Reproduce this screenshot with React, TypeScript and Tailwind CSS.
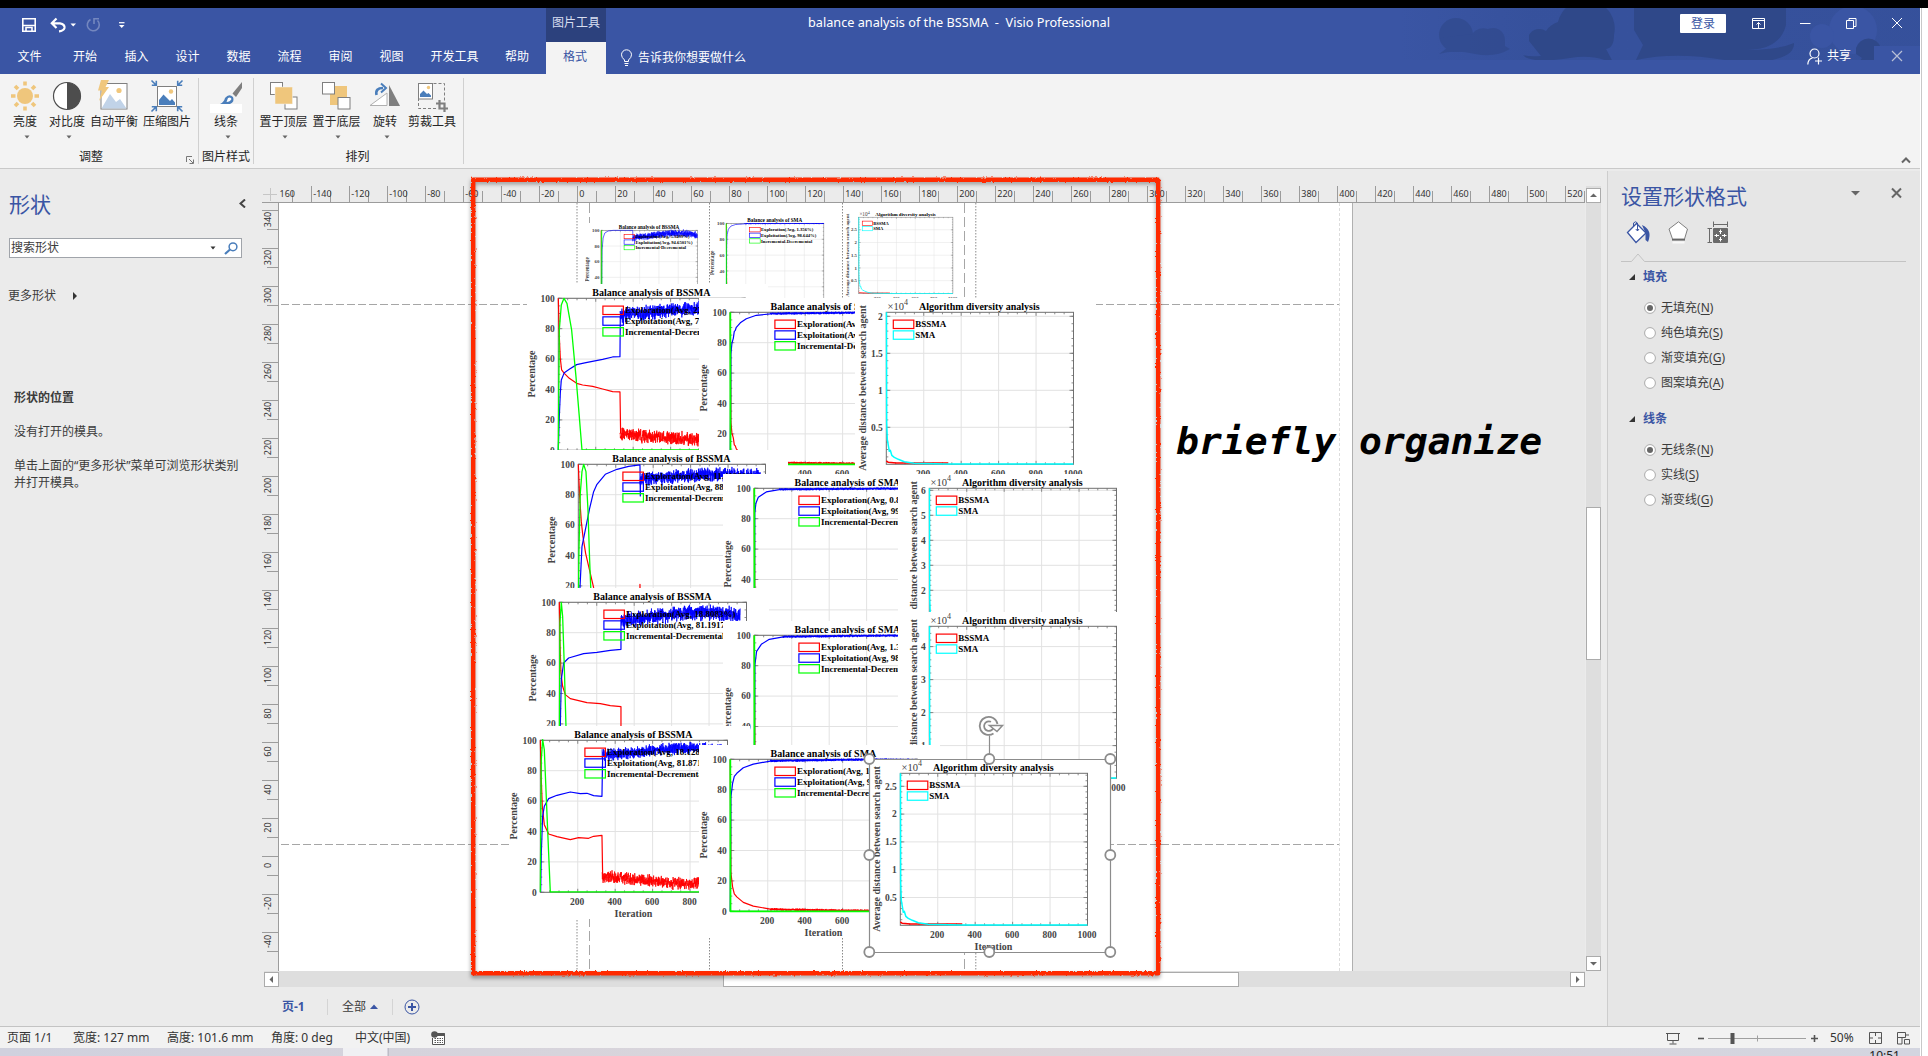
import React from "react";

type P = [number, number];

/* ---------- deterministic noise ---------- */
function rng(seed: number) {
  let s = seed * 7919;
  return () => {
    s = (s * 16807) % 2147483647;
    return s / 2147483647;
  };
}
function noise(seed: number, x0: number, x1: number, ya: number, yb: number, amp: number): P[] {
  const r = rng(seed);
  const out: P[] = [];
  for (let x = x0; x <= x1; x += 0.14) {
    const t = (x - x0) / (x1 - x0);
    const base = ya + (yb - ya) * Math.min(1, t * 1.7) + Math.max(0, t - 0.75) * (ya - yb) * 1.5;
    const v = r() + r() - 1;
    out.push([x, base + v * amp]);
  }
  return out;
}
const path = (pts: P[]) => "M" + pts.map((p) => p[0].toFixed(2) + " " + p[1].toFixed(2)).join("L");
const local = (pts: P[], ox: number, oy: number, k = 3): P[] =>
  pts.map(([x, y]) => [(x - ox) / k, (y - oy) / k] as P);

const PW = 187.2;
const PH = 152;

function Axes({ yMajor, yMinor }: { yMajor: number[]; yMinor: number }) {
  const xs = [0.2, 0.4, 0.6, 0.8].map((f) => f * PW);
  const minorX = Array.from({ length: 19 }, (_, i) => ((i + 1) * PW) / 20);
  const minorY: number[] = [];
  const anchor = yMajor[0];
  for (let y = anchor % yMinor; y < PH; y += yMinor) minorY.push(y);
  return (
    <g>
      {xs.map((x) => (
        <path key={x} d={`M${x} 0V${PH}`} stroke="#e2e2e2" />
      ))}
      {yMajor.map((y) => (
        <path key={y} d={`M0 ${y}H${PW}`} stroke="#e2e2e2" />
      ))}
      <rect x="0" y="0" width={PW} height={PH} fill="none" stroke="#707070" />
      {minorX.map((x, i) => (
        <path
          key={x}
          d={`M${x} 0v${i % 4 === 3 ? 3.5 : 2}M${x} ${PH}v${i % 4 === 3 ? -3.5 : -2}`}
          stroke="#707070"
          strokeWidth="0.8"
        />
      ))}
      {minorY.map((y) => (
        <path key={y} d={`M0 ${y}h2M${PW} ${y}h-2`} stroke="#707070" strokeWidth="0.8" />
      ))}
      {yMajor.map((y) => (
        <path key={y} d={`M0 ${y}h4M${PW} ${y}h-4`} stroke="#707070" strokeWidth="0.8" />
      ))}
    </g>
  );
}

function Frame({
  x,
  y,
  s = 1,
  yMajor,
  yMinor,
  yLabels,
  yTitle,
  title,
  legend,
  lx,
  exp,
  titleX = -23,
  children,
}: {
  x: number;
  y: number;
  s?: number;
  yMajor: number[];
  yMinor: number;
  yLabels: string[];
  yTitle: string;
  title: string;
  legend: [string, string][];
  lx: number;
  exp?: boolean;
  titleX?: number;
  children: React.ReactNode;
}) {
  return (
    <svg
      className="absolute bg-white"
      style={{ left: x - 279 - 31.3 * s, top: y - 203 - 14.3 * s }}
      width={241 * s}
      height={193 * s}
      viewBox="-31.3 -14.3 241 193"
      fontFamily="'Liberation Serif', serif"
      fontWeight="bold"
    >
      <Axes yMajor={yMajor} yMinor={yMinor} />
      {children}
      <g fontSize="9.5" fill="#454545">
        {yLabels.map((l, i) => (
          <text key={l} x="-3.5" y={yMajor[i] + 3.3} textAnchor="end">
            {l}
          </text>
        ))}
        {["200", "400", "600", "800", "1000"].map((l, i) => (
          <text key={l} x={((i + 1) * PW) / 5 - 0.5} y={PH + 12.6} textAnchor="middle">
            {l}
          </text>
        ))}
      </g>
      <text x={PW / 2 - 0.5} y={PH + 24.6} fontSize="10" textAnchor="middle" fill="#454545">
        Iteration
      </text>
      <text
        transform={`translate(${titleX} 75.7) rotate(-90)`}
        fontSize="10"
        textAnchor="middle"
        fill="#454545"
      >
        {yTitle}
      </text>
      <text x={PW / 2 - 0.5} y="-2.8" fontSize="10" textAnchor="middle" fill="#000">
        {title}
      </text>
      {exp && (
        <text x="1.3" y="-2.4" fontSize="10.5" fontWeight="normal" fill="#3c3c3c">
          ×10
          <tspan dy="-4.5" fontSize="8">
            4
          </tspan>
        </text>
      )}
      {legend.map(([c, l], i) => (
        <g key={l}>
          <rect x={lx} y={7.8 + i * 10.75} width="20.5" height="8.4" fill={exp ? "#fff" : "none"} stroke={c} strokeWidth="1.2" />
          <text x={lx + 22} y={15.2 + i * 10.75} fontSize="9" fill="#000">
            {l}
          </text>
        </g>
      ))}
    </svg>
  );
}

const balY = [0, 30.4, 60.8, 91.2, 121.6, 152];
const balL = ["100", "80", "60", "40", "20", "0"];

interface BalProps {
  x: number;
  y: number;
  s?: number;
  kind: "BSSMA" | "SMA";
  a: string;
  b: string;
  red: P[];
  blue: P[];
  green: P[];
  noisy?: P[][];
}
function Balance({ x, y, s, kind, a, b, red, blue, green, noisy }: BalProps) {
  return (
    <Frame
      x={x}
      y={y}
      s={s}
      yMajor={balY}
      yMinor={7.6}
      yLabels={balL}
      yTitle="Percentage"
      title={`Balance analysis of ${kind}`}
      lx={44.6}
      legend={[
        ["#f00", `Exploration(Avg, ${a}%)`],
        ["#00f", `Exploitation(Avg, ${b}%)`],
        ["#0f0", "Incremental-Decremental"],
      ]}
    >
      <g fill="none" strokeWidth="1.2" strokeLinejoin="round">
        <path d={path(red)} stroke="#f00" />
        <path d={path(blue)} stroke="#00f" />
        {noisy && <path d={path(noisy[0])} stroke="#f00" strokeWidth="0.8" />}
        {noisy && <path d={path(noisy[1])} stroke="#00f" strokeWidth="0.8" />}
        <path d={path(green)} stroke="#0f0" strokeWidth={kind === "SMA" ? 1.8 : 1.3} />
      </g>
    </Frame>
  );
}

function Diversity({
  x,
  y,
  s,
  top,
  step,
  minor,
  labels,
  titleX = -20,
}: {
  x: number;
  y: number;
  s?: number;
  top: number;
  step: number;
  minor: number;
  labels: string[];
  titleX?: number;
}) {
  return (
    <Frame
      x={x}
      y={y}
      s={s}
      yMajor={labels.map((_, i) => top + i * step)}
      yMinor={minor}
      yLabels={labels}
      yTitle="Average distance between search agent"
      title="Algorithm diversity analysis"
      lx={7}
      exp
      titleX={titleX}
      legend={[
        ["#f00", "BSSMA"],
        ["#0ff", "SMA"],
      ]}
    >
      <g fill="none" strokeWidth="1.5" strokeLinejoin="round">
        <path d="M0 148.500L2 150L10 150.600L62 150.800" stroke="#f00" />
        <path d="M0.200 0L0.400 110L1 127L2 133L3 139L4 138L5.500 143L8 145L12 147L18 149.500L28 151L60 151.800H187" stroke="#0ff" />
      </g>
    </Frame>
  );
}

const smaGreen: P[] = [[0, 0], [0.2, 152], [187, 152]];
const smaBlue = (pts: P[], seed: number): P[] => {
  const out: P[] = [[0, 152], ...pts];
  const last = pts[pts.length - 1];
  return [...out, ...noise(seed, last[0], 187, last[1] - 0.2, 0.3, 0.9)];
};
const mirror = (pts: P[]): P[] => [[0, 0], ...pts.slice(1).map(([x, y]) => [x, 151.6 - y] as P)];
const b1 = smaBlue([[0.7, 45], [1.5, 22], [4, 11], [9, 5], [18, 2], [35, 0.8]], 5);
const b2 = smaBlue([[0.6, 42], [1.6, 31], [3, 26], [4, 19], [5, 18], [6, 15], [10, 10.5], [16, 6.5], [26, 3], [40, 1.6]], 11);
const b3 = smaBlue([[0.5, 25], [1.6, 15], [4, 9], [12, 3.6], [25, 1.3]], 21);
const b4 = smaBlue([[0.6, 30], [2.3, 16], [7, 9], [15, 4], [29, 1.6]], 31);
const b5 = smaBlue([[0.6, 38], [2.3, 24], [4, 17], [6.5, 14], [13, 8.5], [23, 4.8], [40, 1.8]], 41);

function Charts() {
  return (
    <>
      <Balance
        x={601.3} y={230.7} s={0.515} kind="BSSMA" a="5.3499" b="94.6501"
        red={[[0, 0], [1, 152]]}
        blue={[...local([[395, 416], [397, 240], [400, 205], [405, 190], [415, 184], [430, 182], [489, 182], [489, 215]], 394, 182, 1.545)]}
        green={[[0, 152], [0.6, 2], [1.2, 0], [1.6, 152], [187, 152]]}
        noisy={[noise(3, 61.8, 187, 136, 145, 8), noise(4, 61.8, 187, 15, 5, 8)]}
      />
      <Balance x={726.7} y={223.7} s={0.521} kind="SMA" a="1.356" b="98.644" red={mirror(b1)} blue={b1} green={smaGreen} />
      <Diversity x={858.3} y={217.3} s={0.503} top={25} step={25.3} minor={5.06} labels={["2.5", "2", "1.5", "1", "0.5"]} />

      <Balance
        x={558.7} y={298.7} kind="BSSMA" a="22.4712" b="77.5288"
        red={local([[267, 385], [270, 500], [273, 565], [277, 600], [285, 610], [300, 625], [322, 640], [340, 645], [370, 649], [400, 657], [430, 665], [452, 666], [454, 790]], 267, 385)}
        blue={local([[267, 840], [270, 740], [273, 670], [276, 630], [285, 608], [300, 598], [322, 584], [350, 578], [400, 568], [430, 561], [452, 560], [453, 440]], 267, 385)}
        green={local([[267, 840], [270, 480], [276, 405], [284, 385], [293, 400], [307, 480], [320, 620], [330, 740], [338, 840], [828, 840]], 267, 385)}
        noisy={[noise(7, 61.8, 187, 136, 141, 8), noise(8, 61.8, 187, 17, 10, 8.5)]}
      />
      <Balance x={730.3} y={312.7} kind="SMA" a="2.2417" b="97.7583" red={mirror(b2)} blue={b2} green={smaGreen} />
      <Diversity x={886.3} y={312.7} top={4} step={37} minor={7.4} labels={["2", "1.5", "1", "0.5"]} />

      <Balance
        x={578} y={464.5} kind="BSSMA" a="11.4126" b="88.5874"
        red={local([[234, 43], [238, 140], [243, 215], [248, 260], [256, 310], [280, 413], [300, 470], [418, 490], [419, 403], [420, 460]], 234, 43)}
        blue={local([[235, 500], [239, 413], [245, 290], [256, 235], [268, 175], [280, 125], [290, 103], [315, 73], [350, 58], [385, 49], [419, 45], [420, 138], [421, 85]], 234, 43)}
        green={local([[234, 500], [236, 300], [240, 130], [245, 65], [250, 43], [257, 65], [263, 180], [268, 330], [274, 480]], 234, 43)}
        noisy={[noise(13, 61.8, 187, 134, 141, 8), noise(14, 61.8, 182, 15, 10, 8)]}
      />
      <Balance x={754.3} y={488.3} kind="SMA" a="0.8214" b="99.1786" red={mirror(b3)} blue={b3} green={smaGreen} />
      <Diversity x={929.3} y={488.7} top={2} step={25} minor={5} labels={["6", "5", "4", "3", "2", "1"]} titleX={-12.6} />

      <Balance
        x={559} y={602.5} kind="BSSMA" a="18.8083" b="81.1917"
        red={local([[177, 458], [179, 580], [182, 670], [187, 710], [195, 735], [210, 747], [260, 759], [300, 762], [330, 768], [362, 771], [362, 870]], 177, 458)}
        blue={local([[179, 890], [181, 780], [183, 690], [190, 640], [205, 625], [250, 612], [290, 608], [330, 602], [362, 599], [362, 510]], 177, 458)}
        green={local([[177, 900], [179, 520], [183, 458], [187, 500], [192, 650], [199, 900]], 177, 458)}
        noisy={[noise(23, 61.8, 187, 134, 141, 8), noise(24, 61.8, 181, 18, 10, 9)]}
      />
      <Balance x={754.3} y={635.3} kind="SMA" a="1.3342" b="98.6658" red={mirror(b4)} blue={b4} green={smaGreen} />
      <Diversity x={929.3} y={626.3} top={20.3} step={33} minor={6.6} labels={["4", "3", "2", "1"]} titleX={-12.6} />

      <Balance
        x={540} y={740.7} kind="BSSMA" a="18.1287" b="81.8713"
        red={local([[210, 62], [213, 180], [216, 260], [222, 315], [235, 343], [260, 351], [300, 360], [325, 354], [355, 356], [370, 350], [395, 347], [397, 465]], 210, 62)}
        blue={local([[211, 517], [213, 400], [217, 290], [222, 260], [235, 237], [260, 227], [300, 217], [330, 222], [350, 221], [370, 228], [395, 230], [397, 110]], 210, 62)}
        green={local([[210, 517], [213, 120], [217, 60], [222, 90], [232, 330], [240, 517], [770, 517]], 210, 62)}
        noisy={[noise(33, 61.8, 187, 136, 143, 7), noise(34, 61.8, 187, 15, 8, 7)]}
      />
      <Balance x={730.3} y={759.3} kind="SMA" a="1.6021" b="98.3979" red={mirror(b5)} blue={b5} green={smaGreen} />
      <Diversity x={900.3} y={773.5} top={13} step={27.8} minor={5.56} labels={["2.5", "2", "1.5", "1", "0.5"]} />
    </>
  );
}

/* ---------- canvas ---------- */
function Guides() {
  return (
    <svg className="absolute left-0 top-0" width="1073" height="768" viewBox="279 203 1073 768" fill="none" stroke="#a6a6a6">
      <g strokeDasharray="8 3">
        <path d="M281 304.500H1339M281 844.500H1339" />
      </g>
      <path d="M589.500 203V971M964.500 203V971" strokeDasharray="10 4" />
      <path d="M1339.500 203V971" stroke="#dcdcdc" strokeDasharray="3 2" />
      <path d="M577 203V971M709.500 203V971M842.500 203V971M975.800 203V971" stroke="#8a8a8a" strokeDasharray="1.500 1.500" />
    </svg>
  );
}

function Selection() {
  const pts: P[] = [[869, 759], [989, 759], [1110, 759], [869, 855], [1110, 855], [869, 952], [989, 952], [1110, 952]];
  return (
    <svg className="absolute left-0 top-0" width="1073" height="768" viewBox="279 203 1073 768" fill="none" stroke="#8c8c8c">
      <path d="M869.500 759.500H1110.500V952.500H869.500ZM989.500 759V730" strokeWidth="1.2" />
      {pts.map(([x, y]) => (
        <circle key={`${x}-${y}`} cx={x + 0.3} cy={y} r="5" fill="#fff" strokeWidth="1.8" />
      ))}
      <circle cx="989" cy="726" r="9.5" fill="#fff" stroke="none" />
      <path d="M997.500 724A9 9 0 1 0 993.500 733.500M993.500 727.500A4.800 4.800 0 1 1 991 721.800" strokeWidth="1.800" />
      <path d="M989.500 725.500H1002.500L997 731.500Z" fill="#fff" strokeWidth="1.500" />
    </svg>
  );
}

function Highlight() {
  return (
    <svg className="pointer-events-none absolute left-[200px] top-[-1px]" width="710" height="820" viewBox="462 168 710 820" fill="none">
      <defs>
        <filter id="rough" x="-5%" y="-5%" width="110%" height="110%">
          <feTurbulence type="fractalNoise" baseFrequency="0.45" numOctaves="2" seed="4" />
          <feDisplacementMap in="SourceGraphic" scale="2.6" />
        </filter>
        <filter id="soft" x="-5%" y="-5%" width="110%" height="110%">
          <feGaussianBlur stdDeviation="2.2" />
        </filter>
      </defs>
      <rect x="473" y="182" width="685" height="794" stroke="#000" strokeOpacity="0.4" strokeWidth="4" filter="url(#soft)" />
      <rect x="473.200" y="179.800" width="685" height="793.500" stroke="#ff2a00" strokeWidth="4.400" strokeLinejoin="round" filter="url(#rough)" />
    </svg>
  );
}

function HRuler() {
  const vals = Array.from({ length: 35 }, (_, i) => -160 + i * 20);
  return (
    <svg width="1323" height="17" viewBox="262 186 1323 17" fontFamily="'Noto Sans', sans-serif" fontSize="9" fill="#333">
      <path d="M263 194.500h14M270.500 188v13" stroke="#c6c6c6" />
      <path d="M262 202.500H1585" stroke="#9c9c9c" />
      {vals.map((v) => {
        const x = 577.3 + v * 1.9;
        return (
          <g key={v}>
            {v > -160 && <path d={`M${Math.floor(x) + 0.5} 186V202`} stroke="#9c9c9c" />}
            <path d={`M${Math.floor(x + 19) + 0.5} 191V202`} stroke="#9c9c9c" />
            <text x={v === -160 ? 279.5 : x + 2} y="197.300">
              {v === -160 ? "160" : v}
            </text>
          </g>
        );
      })}
    </svg>
  );
}
function VRuler() {
  const vals = Array.from({ length: 20 }, (_, i) => 340 - i * 20);
  return (
    <svg width="17" height="768" viewBox="262 203 17 768" fontFamily="'Noto Sans', sans-serif" fontSize="9" fill="#333">
      <path d="M278.500 203V971" stroke="#9c9c9c" />
      {vals.map((v) => {
        const y = Math.round(210.3 + (340 - v) * 1.9) + 0.5;
        return (
          <g key={v}>
            <path d={`M262 ${y}H278M267 ${y + 19}H278`} stroke="#9c9c9c" />
            <text transform={`translate(271 ${y + 9}) rotate(-90)`} textAnchor="middle">
              {v}
            </text>
          </g>
        );
      })}
    </svg>
  );
}

function ScrollBtn({ d }: { d: string }) {
  return (
    <svg width="15" height="15" viewBox="0 0 15 15" className="shrink-0">
      <rect x="0.5" y="0.5" width="14" height="14" fill="#fff" stroke="#ababab" />
      <path d={d} fill="#666" />
    </svg>
  );
}

/* ---------- header ---------- */
function Down({ c = "#666" }: { c?: string }) {
  return (
    <svg width="6" height="4" viewBox="0 0 6 4">
      <path d="M0.500 0.500H5.500L3 3.500Z" fill={c} />
    </svg>
  );
}

function TitleArt() {
  return (
    <svg className="absolute right-0 top-0" width="520" height="52" viewBox="1400 8 520 52">
      <defs>
        <linearGradient id="fade" x1="0" x2="1">
          <stop offset="0" stopColor="#2f4a8e" stopOpacity="0" />
          <stop offset="0.25" stopColor="#2f4a8e" stopOpacity="0.35" />
          <stop offset="1" stopColor="#2f4a8e" stopOpacity="0.4" />
        </linearGradient>
      </defs>
      <rect x="1400" y="8" width="520" height="52" fill="url(#fade)" />
      <circle cx="1853" cy="30" r="24" fill="#3a55a4" />
      <circle cx="1822" cy="36" r="12" fill="#3a55a4" />
      <g fill="#2f4889">
        <g opacity="0.6">
          <circle cx="1456" cy="35" r="17" />
          <path d="M1440 38L1447 48L1439 54Q1455 49 1475 54Q1495 58 1510 49L1505 46V40A12 12 0 0 0 1488 29A14 14 0 0 0 1472 34Z" />
        </g>
        <path d="M1529 41V35A12 12 0 0 1 1546 31A22 22 0 0 1 1558 22A27 27 0 0 1 1614 35Q1614 48 1606 49L1614 64Q1595 54 1570 58Q1530 64 1523 55Q1528 57 1541 56Z" />
        <path d="M1634 8H1786V25Q1780 50 1745 50Q1778 50 1794 43Q1795 62 1740 63Q1680 50 1636 60L1643 45L1634 30Z" />
        <path d="M1856 54V48A13 13 0 0 1 1881 48Q1900 46 1905 54L1866 62L1856 66L1862 58Z" />
      </g>
    </svg>
  );
}

function Header() {
  const tabs: [string, string][] = [
    ["文件", "w-[59px]"], ["开始", "w-[52px]"], ["插入", "w-[51px]"], ["设计", "w-[51px]"], ["数据", "w-[51px]"],
    ["流程", "w-[51px]"], ["审阅", "w-[51px]"], ["视图", "w-[51px]"], ["开发工具", "w-[75px]"], ["帮助", "w-[50px]"],
  ];
  return (
    <div className="relative bg-[#3a55a4] text-xs text-white">
      <TitleArt />
      <div className="relative flex h-[34px]">
        <div className="w-[546px]">
          <svg width="140" height="34" viewBox="0 8 140 34" fill="none" stroke="#fff" strokeWidth="1.600">
            <path d="M22.800 18.800H35.200V31.200H22.800ZM22.800 25.500H35.200" />
            <path d="M26 31v-3.500h6V31" />
            <path d="M52.500 23.300H60Q65 24 64.500 28Q63.500 31 59 31.300M56.500 18.500L51.800 23.300L56.500 28" strokeWidth="2.200" />
            <path d="M70.500 23.500H76L73.200 26.500Z" fill="#fff" stroke="none" />
            <path d="M90.500 19.500A6 6 0 1 0 97.500 20.500M94 24V18.800H99" stroke="#7487bf" />
            <path d="M119 22.700H124.500" strokeWidth="1.200" />
            <path d="M119 25H124.500L121.700 28Z" fill="#fff" stroke="none" />
          </svg>
        </div>
        <div className="flex w-[60px] items-start justify-center bg-[#2c417d] pt-[6px] leading-[17px] text-[#d8def0]">图片工具</div>
        <div className="flex flex-1 items-start pl-[202px] pt-[6px] text-[12.700px] leading-[17px] whitespace-pre">
          balance analysis of the BSSMA  -  Visio Professional
        </div>
        <div className="flex w-[240px] items-start pt-[6px]">
          <div className="flex h-[19px] w-[46px] items-center justify-center rounded-[1px] bg-white text-[#3a55a4]">登录</div>
          <svg width="194" height="20" viewBox="1726 14 194 20" fill="none" stroke="#fff" className="shrink-0">
            <path d="M1752.500 18.500H1764.500V28.500H1752.500ZM1752.500 20.500H1764.500M1758.500 28V22.500M1756.500 24.500L1758.500 22.500L1760.500 24.500" />
            <path d="M1800 23.500H1810.500" />
            <path d="M1846.500 20.500H1853.500V28.500H1846.500ZM1849 20V18.500H1856V26.500H1854" />
            <path d="M1892 18L1902 28M1902 18L1892 28" />
          </svg>
        </div>
      </div>
      <div className="relative flex h-8">
        {tabs.map(([t, w]) => (
          <div key={t} className={`${w} flex h-[30px] shrink-0 items-center justify-center`}>{t}</div>
        ))}
        <div className="w-1 shrink-0" />
        <div className="flex h-8 w-[60px] shrink-0 items-center justify-center bg-[#f3f3f3] pb-[2px] pr-[2px] text-[#3a55a4]">格式</div>
        <div className="flex h-8 flex-1 items-center gap-[5px] pl-[14px]">
          <svg width="13" height="18" viewBox="0 0 13 18" fill="none" stroke="#fff">
            <path d="M4.500 12.500V11Q1.500 8.500 1.500 5.800A5 5 0 0 1 11.500 5.800Q11.500 8.500 8.500 11V12.500ZM4.500 14.500H8.500M5 16.500H8" />
          </svg>
          <span>告诉我你想要做什么</span>
        </div>
        <div className="flex w-[67px] items-center gap-1 pb-1">
          <svg width="16" height="17" viewBox="0 0 16 17" fill="none" stroke="#fff" strokeWidth="1.200">
            <circle cx="7.500" cy="5.500" r="4.500" />
            <path d="M0.800 16.500Q1 11 5.500 10M11.500 9.500V16.500M8 13H15" />
          </svg>
          共享
        </div>
        <div className="flex h-7 w-[46px] items-center justify-center self-end bg-[#3a55a4]">
          <svg width="12" height="12" viewBox="0 0 12 12" stroke="#b9c0d6" className="-mt-2">
            <path d="M1 1L11 11M11 1L1 11" strokeWidth="1.200" />
          </svg>
        </div>
      </div>
    </div>
  );
}

/* ---------- ribbon ---------- */
const icons: Record<string, React.ReactNode> = {
  亮度: (
    <g stroke="#efc67c" strokeWidth="3.600">
      <circle cx="16" cy="16" r="8" fill="#efc67c" stroke="none" />
      <path d="M16 1.500v4M16 26.500v4M2 16h4.500M25.500 16H30M6 6l3 3M23 23l3 3M26 6l-3 3M9 23l-3 3" />
    </g>
  ),
  对比度: (
    <g>
      <circle cx="16" cy="16" r="13.500" fill="#fff" stroke="#4d4d4d" strokeWidth="1.200" />
      <path d="M16 2.500a13.500 13.500 0 0 1 0 27z" fill="#4d4d4d" />
    </g>
  ),
  自动平衡: (
    <g>
      <rect x="3" y="3.500" width="26" height="25.500" fill="#fff" stroke="#7f7f7f" />
      <path d="M3.500 28.500L12 14L18 22L22 19L28.500 28.500Z" fill="#c1d3e8" />
      <circle cx="21" cy="10.500" r="2.600" fill="#f0c77d" />
      <path d="M3 0H11L7.500 7H11L1 21L4 10.500H0Z" fill="#f0c77d" />
    </g>
  ),
  压缩图片: (
    <g>
      <rect x="6.500" y="6.500" width="19" height="20" fill="#fff" stroke="#7f7f7f" />
      <path d="M8 25V20L12.500 14.500L19 21L21 19L24 22.500V25Z" fill="#4a7ebb" />
      <circle cx="20" cy="11.500" r="2.200" fill="#f0c77d" />
      <path d="M0.500 0.500L5 5M5.300 0.800V5.300H0.800M31.500 0.500L27 5M26.700 0.800V5.300H31.200M0.500 31.500L5 27M0.800 26.700H5.300V31.200M31.500 31.500L27 27M31.200 26.700H26.700V31.200" stroke="#4a7ebb" strokeWidth="1.600" fill="none" />
    </g>
  ),
  线条: (
    <g>
      <rect x="0" y="24" width="32" height="9" fill="#fff" />
      <path d="M32 2V8L26 17L22.500 13.500Z" fill="#7f7f7f" />
      <path d="M10 24Q14 22 15 18Q19 13 23 17Q25 22 20 24Z" fill="#4a7ebb" />
      <path d="M18 18Q20.500 16.500 21.500 19Q20 22 16.500 22Z" fill="#fff" />
    </g>
  ),
  置于顶层: (
    <g>
      <rect x="2.500" y="2.500" width="12" height="12" fill="#fff" stroke="#7f7f7f" />
      <rect x="17" y="17" width="12" height="12" fill="#fff" stroke="#7f7f7f" />
      <rect x="7" y="7" width="17.500" height="17" fill="#efc67c" stroke="#f3f3f3" strokeWidth="0.500" />
    </g>
  ),
  置于底层: (
    <g>
      <rect x="9" y="6" width="17" height="19" fill="#efc67c" />
      <rect x="1.500" y="2.500" width="12" height="11.500" fill="#fff" stroke="#7f7f7f" />
      <rect x="17" y="17.500" width="12" height="11.500" fill="#fff" stroke="#7f7f7f" />
    </g>
  ),
  旋转: (
    <g>
      <path d="M1 25.500H18V13Z" fill="#fff" stroke="#b0b0b0" />
      <path d="M20 5L31 26H20Z" fill="#7f7f7f" />
      <path d="M7.500 15Q6 8 14 8" stroke="#4a7ebb" strokeWidth="2.600" fill="none" />
      <path d="M12 3.500L17 8L12 12.500" stroke="#4a7ebb" strokeWidth="2" fill="none" />
    </g>
  ),
  剪裁工具: (
    <g>
      <path d="M2.500 3.500H28.500V22M2.500 3V28.500H20" fill="none" stroke="#7f7f7f" strokeDasharray="3 2" />
      <rect x="2.500" y="3.500" width="14" height="15.500" fill="#fff" stroke="#7f7f7f" />
      <path d="M4 17V14L7.500 10.500L11 14L12.500 13L15 15.500V17Z" fill="#4a7ebb" />
      <circle cx="12.500" cy="7.500" r="1.700" fill="#f0c77d" />
      <path d="M23.500 20V28.500H32M20 23.500H28.500V32" fill="none" stroke="#7f7f7f" strokeWidth="2.200" />
    </g>
  ),
};

function RibbonButton({ name, w, arrow }: { name: string; w: string; arrow?: boolean }) {
  return (
    <div className={`${w} flex shrink-0 flex-col items-center pt-[6px]`}>
      <svg width="32" height="32" viewBox="0 0 32 32" className="overflow-visible">
        {icons[name]}
      </svg>
      <span className="mt-px h-[17px] leading-[17px] whitespace-nowrap">{name}</span>
      <span className="mt-[5px] ml-[3px] flex h-1">{arrow && <Down />}</span>
    </div>
  );
}
function Group({ w, label, shift = "", corner, children }: { w: string; label: string; shift?: string; corner?: boolean; children: React.ReactNode }) {
  return (
    <div className={`${w} relative my-1 flex flex-col border-r border-[#d0d0d0]`}>
      <div className="-mt-1 flex h-[77px]">{children}</div>
      <div className={`flex h-[14px] items-center justify-center leading-[14px] ${shift}`}>{label}</div>
      {corner && (
        <svg className="absolute right-1 bottom-0" width="8" height="8" viewBox="0 0 8 8" fill="none" stroke="#777">
          <path d="M0.500 6V0.500H6M3 3L7 7M7.500 3.500V7.500H3.500" />
        </svg>
      )}
    </div>
  );
}
function Ribbon() {
  return (
    <div className="flex h-[95px] border-b border-[#c9c9c9] bg-[#f3f3f3] text-xs text-[#262626]">
      <Group w="w-[199px]" label="调整" shift="pr-[16px]" corner>
        <div className="w-[4px]" />
        <RibbonButton name="亮度" w="w-[42px]" arrow />
        <RibbonButton name="对比度" w="w-[42px]" arrow />
        <RibbonButton name="自动平衡" w="w-[52px]" />
        <RibbonButton name="压缩图片" w="w-[54px]" />
      </Group>
      <Group w="w-[55px]" label="图片样式">
        <RibbonButton name="线条" w="w-[54px]" arrow />
      </Group>
      <Group w="w-[210px]" label="排列" shift="pr-[2px]">
        <div className="w-[3px]" />
        <RibbonButton name="置于顶层" w="w-[53px]" arrow />
        <RibbonButton name="置于底层" w="w-[53px]" arrow />
        <RibbonButton name="旋转" w="w-[44px]" arrow />
        <RibbonButton name="剪裁工具" w="w-[50px]" />
      </Group>
      <div className="flex flex-1 items-end justify-end pb-1 pr-[9px]">
        <svg width="10" height="7" viewBox="0 0 10 7" fill="none" stroke="#666" strokeWidth="2">
          <path d="M1 5.500L5 1.500L9 5.500" />
        </svg>
      </div>
    </div>
  );
}

/* ---------- side panels ---------- */
function ShapesPanel() {
  return (
    <div className="w-[262px] shrink-0 text-xs text-[#3c3c3c]">
      <div className="flex h-[69px] items-center justify-between pr-[16px] pl-[9px]">
        <span className="text-[21px] leading-6 text-[#3a55a4]">形状</span>
        <svg width="7" height="9" viewBox="0 0 7 9" fill="none" stroke="#444" strokeWidth="2">
          <path d="M6 0.500L1.500 4.500L6 8.500" />
        </svg>
      </div>
      <div className="ml-[9px] flex h-5 w-[233px] items-center border border-[#a0a4aa] bg-white pr-[3px] pl-px">
        <span className="flex-1 leading-4">搜索形状</span>
        <Down c="#333" />
        <svg className="ml-2" width="14" height="13" viewBox="0 0 14 13" fill="none" stroke="#4a7ebb">
          <circle cx="9" cy="4.800" r="3.900" strokeWidth="1.500" />
          <path d="M6 7.500L1 12" strokeWidth="2.200" />
        </svg>
      </div>
      <div className="mt-[29px] ml-2 flex h-[17px] items-center gap-[17px]">
        <span>更多形状</span>
        <svg width="4" height="8" viewBox="0 0 4 8">
          <path d="M0 0L4 4L0 8Z" fill="#333" />
        </svg>
      </div>
      <div className="mt-[85px] ml-[14px]">
        <div className="h-[17px] leading-[17px] font-bold">形状的位置</div>
        <div className="mt-[17px] leading-[17px]">没有打开的模具。</div>
        <div className="mt-[17px] leading-[17px] whitespace-nowrap">
          单击上面的“更多形状”菜单可浏览形状类别
          <br />
          并打开模具。
        </div>
      </div>
    </div>
  );
}

function Radio({ label, k, on }: { label: string; k: string; on?: boolean }) {
  return (
    <div className="flex h-[25px] items-center gap-[5px] pl-[36px]">
      <svg width="12" height="12" viewBox="0 0 12 12">
        <circle cx="6" cy="6" r="5.400" fill="#fff" stroke="#ababab" />
        {on && <circle cx="6" cy="6" r="3" fill="#666" />}
      </svg>
      <span>
        {label}(<u className="underline-offset-2">{k}</u>)
      </span>
    </div>
  );
}
function Section({ t }: { t: string }) {
  return (
    <div className="flex h-5 items-center gap-2 pl-[21px] font-bold text-[#3a55a4]">
      <svg width="6" height="6" viewBox="0 0 6 6">
        <path d="M6 0V6H0Z" fill="#333" />
      </svg>
      {t}
    </div>
  );
}
function FormatPanel() {
  return (
    <div className="mt-[2px] w-[313px] shrink-0 border-l border-[#cdcdcd] bg-[#e6e6e6] text-xs text-[#3c3c3c]">
      <div className="flex h-[49px] items-center pl-[13px]">
        <span className="flex-1 text-[21px] leading-6 text-[#3a55a4]">设置形状格式</span>
        <svg className="mr-[18px] -mt-[6px]" width="52" height="12" viewBox="0 0 52 12">
          <path d="M1 4H10L5.500 8.500Z" fill="#666" />
          <path d="M42 1.500L51 10.500M51 1.500L42 10.500" stroke="#666" strokeWidth="2" />
        </svg>
      </div>
      <svg width="300" height="42" viewBox="1608 220 300 42" fill="none">
        <path d="M1627.500 232.500L1636.500 223.500L1646 233L1636 242.500Z" fill="#fff" stroke="#3a55a4" strokeWidth="1.300" />
        <path d="M1633.500 227V223Q1635.500 220.500 1637.500 223V231M1635.800 229L1637.500 231L1639 229" stroke="#3a55a4" />
        <path d="M1642 225Q1653 230 1648 242L1645.500 240V233Z" fill="#3a55a4" />
        <path d="M1678.500 221.800L1687.500 229L1684.500 239H1672.500L1669 229Z" fill="#fff" stroke="#7f7f7f" />
        <path d="M1672 239.800H1685" stroke="#666" strokeWidth="1.600" />
        <path d="M1672.500 242.500H1684.500" stroke="#f8f8f8" strokeWidth="2" />
        <rect x="1713" y="228" width="15" height="15" rx="1" fill="#6a6a6a" />
        <path d="M1713.500 221.500V227M1727.500 221.500V227M1714 224.500H1727M1707.500 228.500H1712M1707.500 242.500H1712M1709.500 229V242" stroke="#6a6a6a" />
        <path d="M1720.500 229.500V234M1720.500 237V241.500M1714.500 235.500H1719M1722 235.500H1726.500" stroke="#fff" />
        <path d="M1719 231.500H1722M1719 239.500H1722M1716.500 234V237M1724.500 234V237" stroke="#fff" />
        <path d="M1621 261.500H1631.500L1638 254L1644.500 261.500H1906" stroke="#c3c3c3" />
      </svg>
      <div className="h-[5px]" />
      <Section t="填充" />
      <div className="h-2" />
      <Radio label="无填充" k="N" on />
      <Radio label="纯色填充" k="S" />
      <Radio label="渐变填充" k="G" />
      <Radio label="图案填充" k="A" />
      <div className="h-[14px]" />
      <Section t="线条" />
      <div className="h-2" />
      <Radio label="无线条" k="N" on />
      <Radio label="实线" k="S" />
      <Radio label="渐变线" k="G" />
    </div>
  );
}

function Workspace() {
  return (
    <div className="relative flex flex-1 flex-col pt-[17px]">
      <div className="flex h-[785px]">
        <div className="w-[1323px]">
          <HRuler />
          <div className="flex h-[768px]">
            <VRuler />
            <div className="relative h-[768px] w-[1073px] overflow-hidden bg-white">
              <Guides />
              <Charts />
              <Selection />
            </div>
            <div className="flex-1 border-l border-[#b0b0b0] bg-[#e8e8e8]" />
          </div>
        </div>
        <div className="ml-px flex w-[15px] flex-col bg-[#dedede] pt-[2px]">
          <ScrollBtn d="M4 9H11L7.500 5.500Z" />
          <div className="h-[304px]" />
          <div className="h-[153px] border border-[#ababab] bg-white" />
          <div className="flex-1" />
          <ScrollBtn d="M4 6H11L7.500 9.500Z" />
        </div>
      </div>
      <div className="ml-[2px] flex h-4 w-[1321px] items-center bg-[#dedede]">
        <ScrollBtn d="M9 4V11L5.500 7.500Z" />
        <div className="w-[444px]" />
        <div className="h-[15px] w-[516px] border border-[#ababab] bg-white" />
        <div className="flex-1" />
        <ScrollBtn d="M6 4V11L9.500 7.500Z" />
      </div>
      <div className="flex h-[39px] items-center text-xs">
        <span className="ml-5 w-[45px] font-bold text-[#3a55a4]">页-1</span>
        <span className="flex h-4 items-center gap-1 border-x border-[#d4d4d4] px-[14px] text-[#3c3c3c]">
          全部
          <svg width="8" height="5" viewBox="0 0 8 5">
            <path d="M0 5L4 0.500L8 5Z" fill="#3a55a4" />
          </svg>
        </span>
        <svg className="ml-[11px]" width="16" height="16" viewBox="0 0 16 16" fill="none" stroke="#3a55a4">
          <circle cx="8" cy="8" r="7" />
          <path d="M8 4V12M4 8H12" strokeWidth="2" />
        </svg>
      </div>
      <Highlight />
      <div className="absolute top-[244px] left-[914px] font-['DejaVu_Sans_Mono',monospace] text-[38px] leading-[56px] font-bold whitespace-nowrap text-black italic">
        briefly organize
      </div>
    </div>
  );
}

function StatusBar() {
  return (
    <div className="flex h-[22px] items-center border-t border-[#c3c3c3] bg-[#f2f2f2] text-xs leading-5 text-[#333]">
      <span className="w-[66px] pl-[7px] whitespace-nowrap">页面 1/1</span>
      <span className="w-[94px] pl-[7px] whitespace-nowrap">宽度: 127 mm</span>
      <span className="w-[104px] pl-[7px] whitespace-nowrap">高度: 101.6 mm</span>
      <span className="w-[84px] pl-[7px] whitespace-nowrap">角度: 0 deg</span>
      <span className="w-[83px] pl-[7px] whitespace-nowrap">中文(中国)</span>
      <svg width="14" height="14" viewBox="0 0 14 14">
        <path d="M6 2.500H13.500V13.500H1.500V7" fill="#fff" stroke="#555" />
        <circle cx="3.500" cy="3.500" r="3.300" fill="#555" />
        <path d="M6 2H13.500V5H6Z" fill="#555" />
        <path d="M3.500 7.500H12M3.500 9.500H12M3.500 11.500H12" stroke="#555" strokeDasharray="1.500 1" />
      </svg>
      <div className="flex-1" />
      <svg width="164" height="20" viewBox="1660 1027 164 20" fill="none" stroke="#555">
        <path d="M1666 1032.500H1680M1667.500 1033V1039.500H1678.500V1033M1673 1040V1042.500M1669.500 1043H1676.500" />
        <path d="M1698 1037.500H1704" strokeWidth="1.600" />
        <path d="M1708 1037.500H1806M1757.500 1034.500V1040.500" stroke="#a0a0a0" />
        <path d="M1730.500 1032H1734.500V1043H1730.500Z" fill="#555" stroke="none" />
        <path d="M1811 1037.500H1818M1814.500 1034V1041" strokeWidth="1.600" />
      </svg>
      <span className="w-[44px] pl-[6px]">50%</span>
      <svg width="52" height="20" viewBox="1868 1027 52 20" fill="none" stroke="#555">
        <path d="M1869.500 1031.500H1881.500V1042.500H1869.500ZM1875.500 1032V1035M1875.500 1039V1042M1870 1037H1873M1878 1037H1881" />
        <path d="M1897.500 1031.500H1905.500V1036.500H1897.500ZM1897.500 1036.500H1902V1043H1897.500ZM1904.500 1038.500H1909.500V1043H1904.500ZM1905.500 1034H1909" />
      </svg>
    </div>
  );
}

export default function App() {
  return (
    <div className="flex h-[1056px] w-[1928px] overflow-hidden bg-white font-['Noto_Sans','Noto_Sans_CJK_SC',sans-serif]">
      <div className="flex w-[1920px] shrink-0 flex-col">
        <div className="h-2 bg-black" />
        <Header />
        <Ribbon />
        <div className="flex h-[857px] bg-[#ebebeb]">
          <ShapesPanel />
          <Workspace />
          <FormatPanel />
        </div>
        <StatusBar />
        <div className="flex h-2 bg-gradient-to-r from-[#d0d1de] via-[#dcd6da] to-[#d3d5e0]">
          <div className="w-[343px]" />
          <div className="w-11 bg-[#f0f0f3]" />
          <div className="ml-px w-px bg-[#bdbdc6]" />
          <div className="flex-1" />
          <div className="mr-[20px] h-2 overflow-hidden pt-[2px] text-xs leading-3 text-[#222]">10:51</div>
        </div>
      </div>
      <div className="flex-1 bg-white">
        <div className="h-2 bg-black" />
        <div className="ml-px h-[1048px] border-l border-[#c8c8c8]" />
      </div>
    </div>
  );
}
